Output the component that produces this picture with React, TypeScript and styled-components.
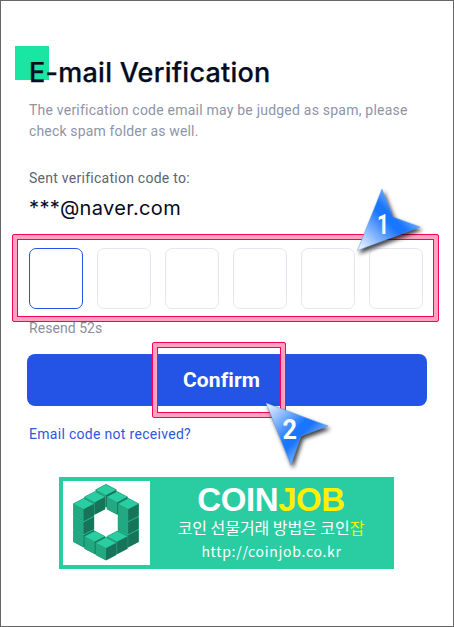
import React from "react";
import styled, { createGlobalStyle } from "styled-components";

const GlobalStyle = createGlobalStyle`
  *, *::before, *::after { box-sizing: border-box; }
  body { margin: 0; background: #fff; }
`;

const Page = styled.main`
  position: relative;
  width: 454px;
  height: 627px;
  padding: 45px 26px 0 28px;
  border: 1px solid #666;
  background: #fff;
  overflow: hidden;
  display: flex;
  flex-direction: column;
  align-items: flex-start;
  font-family: Roboto, "Liberation Sans", sans-serif;
`;

const Title = styled.h1`
  position: relative;
  z-index: 0;
  margin: 0;
  height: 52px;
  line-height: 54px;
  font-family: Inter, sans-serif;
  font-size: 27px;
  font-weight: 500;
  letter-spacing: 0.25px;
  color: #050b20;
  -webkit-text-stroke: 0.25px #050b20;
  white-space: nowrap;

  &::before {
    content: "";
    position: absolute;
    z-index: -1;
    left: -14px;
    top: 0;
    width: 34px;
    height: 34px;
    background: #19e6a2;
  }
`;

const Line = styled.div<{ $color: string; $spacing: number }>`
  height: 21px;
  line-height: 21px;
  font-size: 14px;
  letter-spacing: ${(p) => p.$spacing}px;
  color: ${(p) => p.$color};
  white-space: nowrap;
`;

const Intro = styled.div`
  margin-top: 2px;
`;

const SentTo = styled.div`
  margin-top: 26px;
`;

const Address = styled.div`
  height: 38px;
  line-height: 38px;
  font-family: Inter, sans-serif;
  font-size: 20px;
  letter-spacing: 0.36px;
  color: #050b20;
`;

const CodeRow = styled.div`
  display: flex;
  gap: 14px;
  margin-top: 21px;
`;

const Digit = styled.div<{ $active?: boolean }>`
  width: 54px;
  height: 61px;
  border: 1px solid ${(p) => (p.$active ? "#2354e6" : "#e6e6f0")};
  border-radius: 7px;
`;

const Resend = styled.div`
  margin-top: 9px;
`;

const Confirm = styled.button`
  width: 400px;
  height: 52px;
  margin: 15px 0 0 -2px;
  padding: 0 11px 0 0;
  border: 0;
  border-radius: 8px;
  background: #2354e6;
  color: #fff;
  font-family: Roboto, sans-serif;
  font-size: 21px;
  font-weight: 700;
  letter-spacing: 0.1px;
  line-height: 52px;
`;

const Help = styled.div`
  margin-top: 18px;
`;

const Banner = styled.div`
  display: flex;
  width: 335px;
  height: 92px;
  margin: 32px 0 0 30px;
  padding: 4px;
  background: #2acda2;
`;

const LogoBox = styled.div`
  width: 87px;
  height: 84px;
  background: #fff;
`;

const BannerText = styled.div`
  flex: 1;
  display: flex;
  flex-direction: column;
  align-items: center;
  color: #fff;
  white-space: nowrap;
`;

const Brand = styled.div`
  height: 36px;
  line-height: 38px;
  padding-left: 2px;
  font-family: "Liberation Sans", sans-serif;
  font-size: 33px;
  font-weight: 700;
  letter-spacing: -0.4px;
`;

const Yellow = styled.span`
  color: #fff000;
`;

const Slogan = styled.div`
  height: 23px;
  line-height: 21px;
  padding-left: 2px;
  font-family: "Noto Sans CJK KR", sans-serif;
  font-size: 16px;
  font-weight: 400;
  letter-spacing: -0.05px;
`;

const Url = styled.div`
  height: 24px;
  line-height: 22px;
  padding-left: 3px;
  font-family: "Noto Sans CJK KR", sans-serif;
  font-size: 14px;
  font-weight: 400;
  letter-spacing: 0.7px;
`;

const Highlight = styled.div<{ $x: number; $y: number; $w: number; $h: number }>`
  position: absolute;
  left: ${(p) => p.$x}px;
  top: ${(p) => p.$y}px;
  width: ${(p) => p.$w}px;
  height: ${(p) => p.$h}px;
  border: 1px solid #ff0059;
  border-radius: 2px;
  box-shadow: inset 0 0 0 4px #ffa3c1, inset 0 0 0 5px #ff0059;
`;

const Pointer = styled.svg<{ $x: number; $y: number }>`
  position: absolute;
  left: ${(p) => p.$x}px;
  top: ${(p) => p.$y}px;
  overflow: visible;
  font-family: Roboto, sans-serif;
  font-size: 27px;
  font-weight: 700;
`;

const ArrowShape = styled.path`
  filter: drop-shadow(2px 3px 2px rgba(0, 0, 0, 0.75));
`;

const HW = 10.2;
const HH = 5.3;
const SIDE = 11.9;

// Apex of every cube in the ring, listed from back to front.
const cubes: [number, number][] = [
  [43, 3.6], [31.8, 10.8], [54.2, 10.8],
  [20.7, 43.6], [65.3, 43.6], [20.7, 30.6], [65.3, 30.6],
  [20.7, 17.6], [65.3, 17.6],
  [31.8, 50.2], [54.2, 50.2], [43, 56.6],
];

function Cube({ x, y }: { x: number; y: number }) {
  return (
    <g>
      <path d={`M${x} ${y - 0.5}l${HW + 0.3} ${HH + 0.2}v${SIDE + 0.6}l${-HW - 0.3} ${HH + 0.2}l${-HW - 0.3} ${-HH - 0.2}v${-SIDE - 0.6}z`} fill="#1b8f6c" />
      <path d={`M${x} ${y}l${HW} ${HH}l${-HW} ${HH}l${-HW} ${-HH}z`} fill="#2acda2" />
      <path d={`M${x - HW} ${y + HH}l${HW} ${HH}v${SIDE}l${-HW} ${-HH}z`} fill="#22a981" />
      <path d={`M${x + HW} ${y + HH}l${-HW} ${HH}v${SIDE}l${HW} ${-HH}z`} fill="#17745a" />
    </g>
  );
}

export default function App() {
  return (
    <>
      <GlobalStyle />
      <Page>
        <Title>E-mail Verification</Title>
        <Intro>
          <Line $color="#8f94a8" $spacing={0.22}>The verification code email may be judged as spam, please</Line>
          <Line $color="#8f94a8" $spacing={0.16}>check spam folder as well.</Line>
        </Intro>
        <SentTo>
          <Line $color="#5d6475" $spacing={0.26}>Sent verification code to:</Line>
        </SentTo>
        <Address>***@naver.com</Address>
        <CodeRow>
          {[0, 1, 2, 3, 4, 5].map((i) => <Digit key={i} $active={i === 0} />)}
        </CodeRow>
        <Resend>
          <Line $color="#8b909c" $spacing={0.05}>Resend 52s</Line>
        </Resend>
        <Confirm>Confirm</Confirm>
        <Help>
          <Line $color="#3157dc" $spacing={0.3}>Email code not received?</Line>
        </Help>
        <Banner>
          <LogoBox>
            <svg width="87" height="84" viewBox="0 0 87 84">
              {cubes.map(([x, y]) => <Cube key={`${x}-${y}`} x={x} y={y} />)}
            </svg>
          </LogoBox>
          <BannerText>
            <Brand>COIN<Yellow>JOB</Yellow></Brand>
            <Slogan>코인 선물거래 방법은 코인<Yellow>잡</Yellow></Slogan>
            <Url>http://coinjob.co.kr</Url>
          </BannerText>
        </Banner>

        <Highlight $x={11} $y={233} $w={427} $h={88} />
        <Highlight $x={151} $y={341} $w={134} $h={76} />

        <Pointer $x={356} $y={187} width="64" height="64">
          <defs>
            <linearGradient id="p1" gradientUnits="userSpaceOnUse" x1="0" y1="62" x2="49" y2="13">
              <stop offset="0" stopColor="#fff" />
              <stop offset="0.6" stopColor="#1a75ff" />
              <stop offset="0.7" stopColor="#1a75ff" />
              <stop offset="1" stopColor="#9cc8ff" />
            </linearGradient>
          </defs>
          <ArrowShape d="M0.5 62.5L25 1L36 29L63 39Z" fill="url(#p1)" stroke="#559af0" strokeWidth="0.5" />
          <text x="20" y="46" fill="#fff" textLength="12" lengthAdjust="spacingAndGlyphs">1</text>
        </Pointer>
        <Pointer $x={264} $y={401} width="64" height="64">
          <defs>
            <linearGradient id="p2" gradientUnits="userSpaceOnUse" x1="0" y1="0" x2="49" y2="49">
              <stop offset="0" stopColor="#fff" />
              <stop offset="0.6" stopColor="#1a75ff" />
              <stop offset="0.7" stopColor="#1a75ff" />
              <stop offset="1" stopColor="#9cc8ff" />
            </linearGradient>
          </defs>
          <ArrowShape d="M1 1L63 24L36 34L26 63Z" fill="url(#p2)" stroke="#559af0" strokeWidth="0.5" />
          <text x="17.5" y="37" fill="#fff" textLength="14.5" lengthAdjust="spacingAndGlyphs">2</text>
        </Pointer>
      </Page>
    </>
  );
}
